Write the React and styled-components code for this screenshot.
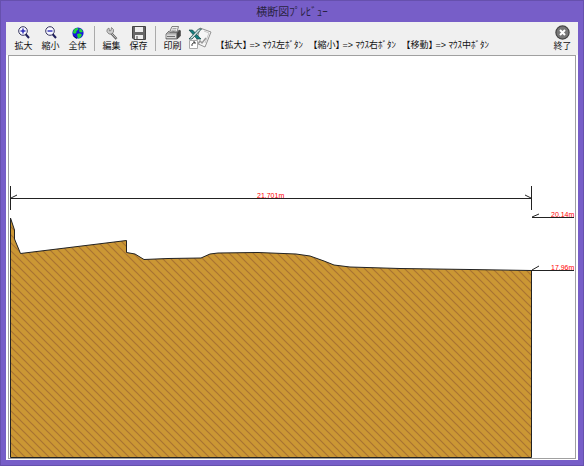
import React from "react";
import styled, { createGlobalStyle } from "styled-components";

const GlobalStyle = createGlobalStyle`
  * {
    box-sizing: border-box;
  }

  body {
    margin: 0;
    background: #775ec8;
    font-family: "Liberation Sans", "Noto Sans CJK JP", sans-serif;
  }
`;

const hints = [
  "【拡大】 => ﾏｳｽ左ﾎﾞﾀﾝ",
  "【縮小】 => ﾏｳｽ右ﾎﾞﾀﾝ",
  "【移動】 => ﾏｳｽ中ﾎﾞﾀﾝ",
];

const ground =
  "10.5,218 14.5,230 14.5,239 20.5,253.5 126.5,240.5 126.5,252.5 135,254 144,259.5 168,258.5 201,258 210,254 218,253 258,252.5 296,254 310,256 324,261 334,265 350,267 400,268.5 470,269.5 531.5,270.5";

const ZoomIcon = ({ plus }) => (
  <svg width="12" height="13" viewBox="0 0 12 13" fill="none">
    <path d="M7.5 8L11 12" stroke="#20205c" strokeWidth="2" />
    <circle cx="5" cy="5" r="4.3" fill="#f8f8ff" stroke="#34345e" strokeWidth="1" />
    <path d="M2.5 5h5" stroke="#1b1bb0" strokeWidth="1.3" />
    {plus && <path d="M5 2.5v5" stroke="#1b1bb0" strokeWidth="1.3" />}
  </svg>
);

const GlobeIcon = () => (
  <svg width="12" height="12" viewBox="0 0 12 12">
    <circle cx="6" cy="6" r="5.6" fill="#1515dc" />
    <path d="M2 2.5L4 1l2.5.2-.5 1.8-1.6 1L4.5 5.4 3 6.8.8 6z" fill="#1fd63a" />
    <path d="M7.5 1.5l2 .8 1.4 2.6-2 .7-1.8-1zM5 7l3-.8 2 1.6-1.5 2.8-2.4.8-.7-2z" fill="#1fd63a" />
    <path d="M1.3 8.5A5.3 5.3 0 0 0 5 11.3" stroke="#0b0b50" fill="none" />
  </svg>
);

const WrenchIcon = () => (
  <svg width="12" height="14" viewBox="0 0 12 14" fill="none">
    <path d="M5 7l5.5 6" stroke="#555" strokeWidth="2.4" />
    <path d="M5 7l5.3 5.6" stroke="#c9c9c9" />
    <path d="M3 2L1 3.5v2.3L3 8h2.5L7.5 6V3.5L5.5 1.5 5 4.5 3.5 5z" fill="#ccc" stroke="#777" strokeWidth=".8" />
  </svg>
);

const SaveIcon = () => (
  <svg width="14" height="14" viewBox="0 0 14 14">
    <path d="M.5.5h13v13H2L.5 12z" fill="#666" stroke="#444" />
    <path d="M3 1h8v5H3zM3 9h8v4H3z" fill="#eee" />
    <path d="M4 10h2v3H4z" fill="#999" />
  </svg>
);

const PrintIcon = () => (
  <svg width="16" height="14" viewBox="0 0 16 14">
    <path d="M5 5l2-4.5h6.5L12 6z" fill="#eee" stroke="#666" strokeWidth=".8" />
    <path d="M7.5 2.5h4M7 4.2h4" stroke="#888" strokeWidth=".7" />
    <path d="M1 8l3-3 .8 1.5H12L14 4l1.5 1v5L12 13H1z" fill="#aaa" stroke="#555" strokeWidth=".7" />
    <path d="M1.5 8.5H11v3.5H1.5z" fill="#d8d8d8" />
    <path d="M12 7l3-3v6l-3 3zM2 10.5h8" fill="#444" stroke="#555" strokeWidth=".8" />
  </svg>
);

const ExcelIcon = () => (
  <svg width="24" height="24" viewBox="0 0 24 24" fill="none">
    <path d="M12 1l11 4-6 15-9-4z" fill="#f6f6f6" stroke="#888" strokeWidth=".9" />
    <path d="M16 4l5 2-4 10" stroke="#bbb" strokeWidth=".8" />
    <path d="M10 17l2-3 2 2 4-5" stroke="#999" strokeWidth="1.5" />
    <path d="M1 3h3.5l8.5 9H9z" fill="#128080" stroke="#174747" strokeWidth=".7" />
    <path d="M10.5 2h3L4 12H1z" fill="#c8dede" stroke="#174747" strokeWidth=".8" />
    <path d="M1.5 13.5h8v8h-8z" fill="#fff" stroke="#aaa" />
    <path d="M4 19v-2l3-2M5 15h2v2" stroke="#444" />
  </svg>
);

const CloseIcon = () => (
  <svg width="15" height="15" viewBox="0 0 15 15">
    <circle cx="7.5" cy="7.5" r="6.6" fill="#777" stroke="#444" strokeWidth="1.2" />
    <path d="M5 5l5 5M10 5l-5 5" stroke="#fff" strokeWidth="2" />
  </svg>
);

const Tool = ({ icon, label }) => (
  <ToolButton type="button">
    <IconBox>{icon}</IconBox>
    {label}
  </ToolButton>
);

const SectionDrawing = () => (
  <Drawing viewBox="9 56 566 402" role="img" aria-label="横断図">
    <defs>
      <pattern id="hatch" width="8" height="8" patternUnits="userSpaceOnUse">
        <rect width="8" height="8" fill="#cb9734" />
        <path d="M-1-1L9 9M-1 7l2 2M7-1l2 2" stroke="#a97331" strokeWidth="1.2" />
      </pattern>
    </defs>
    <polygon points={`${ground} 531.5,457.5 10.5,457.5`} fill="url(#hatch)" />
    <g fill="none" stroke="#222" strokeWidth="1">
      <polyline points={ground} />
      <path d="M10.5 218V457.5H531.5V270" />
      <path d="M10.5 186v24M531.5 186v24M10.5 198.5h521M17 195l-6 3M525 195l6 3" />
      <path d="M532 217.5h42M532 217l7-3M532 270.5h42M532 270l7-4" />
    </g>
    <g fill="#f00" fontFamily="Liberation Sans, sans-serif" fontSize="7">
      <text x="257" y="198">21.701m</text>
      <text x="551" y="217">20.14m</text>
      <text x="551" y="270">17.96m</text>
    </g>
  </Drawing>
);

const App = () => {
  return (
    <Window>
      <GlobalStyle />
      <TitleBar>横断図ﾌﾟﾚﾋﾞｭｰ</TitleBar>
      <Content>
        <Toolbar>
          <Tool icon={<ZoomIcon plus />} label="拡大" />
          <Tool icon={<ZoomIcon />} label="縮小" />
          <Tool icon={<GlobeIcon />} label="全体" />
          <Divider />
          <Tool icon={<WrenchIcon />} label="編集" />
          <Tool icon={<SaveIcon />} label="保存" />
          <Divider />
          <Tool icon={<PrintIcon />} label="印刷" />
          <ExcelButton type="button" aria-label="Excel">
            <ExcelIcon />
          </ExcelButton>
          <Hints>
            {hints.map((hint) => (
              <span key={hint}>{hint}</span>
            ))}
          </Hints>
          <Tool icon={<CloseIcon />} label="終了" />
        </Toolbar>
        <Canvas>
          <SectionDrawing />
        </Canvas>
      </Content>
    </Window>
  );
};

export default App;

const Window = styled.div`
  display: flex;
  flex-direction: column;
  min-height: 100vh;
  padding: 0 5px 5px;
  background: #775ec8;
  border: 1px solid #6650ad;
`;

const TitleBar = styled.h1`
  margin: 0;
  height: 21px;
  line-height: 23px;
  font-size: 11px;
  font-weight: 400;
  text-align: center;
  color: #292341;
`;

const Content = styled.main`
  flex: 1;
  background: #fff;
`;

const Toolbar = styled.div`
  display: flex;
  align-items: center;
  height: 33px;
  padding: 0 2px 0 4px;
  background: #f0f0f0;
`;

const ToolButton = styled.button`
  display: flex;
  flex-direction: column;
  align-items: center;
  flex: none;
  width: 27px;
  height: 28px;
  padding: 0;
  border: 0;
  background: none;
  font-family: inherit;
  font-size: 9px;
  line-height: 11px;
  color: #111;
`;

const IconBox = styled.span`
  display: flex;
  align-items: center;
  justify-content: center;
  height: 16px;
`;

const Divider = styled.span`
  width: 1px;
  height: 25px;
  margin: 0 3px;
  background: #aaa;
`;

const ExcelButton = styled(ToolButton)`
  justify-content: center;
`;

const Hints = styled.div`
  display: flex;
  flex: 1;
  gap: 10px;
  padding: 14px 0 0 7px;
  font-size: 9px;
  line-height: 11px;
  /* half-width brackets */
  font-feature-settings: "halt";
  white-space: nowrap;
  color: #111;
`;

const Canvas = styled.div`
  margin: 0 2px;
  border: 1px solid #a0a0a0;
  background: #fff;
`;

const Drawing = styled.svg`
  display: block;
  width: 100%;
  height: auto;
`;
